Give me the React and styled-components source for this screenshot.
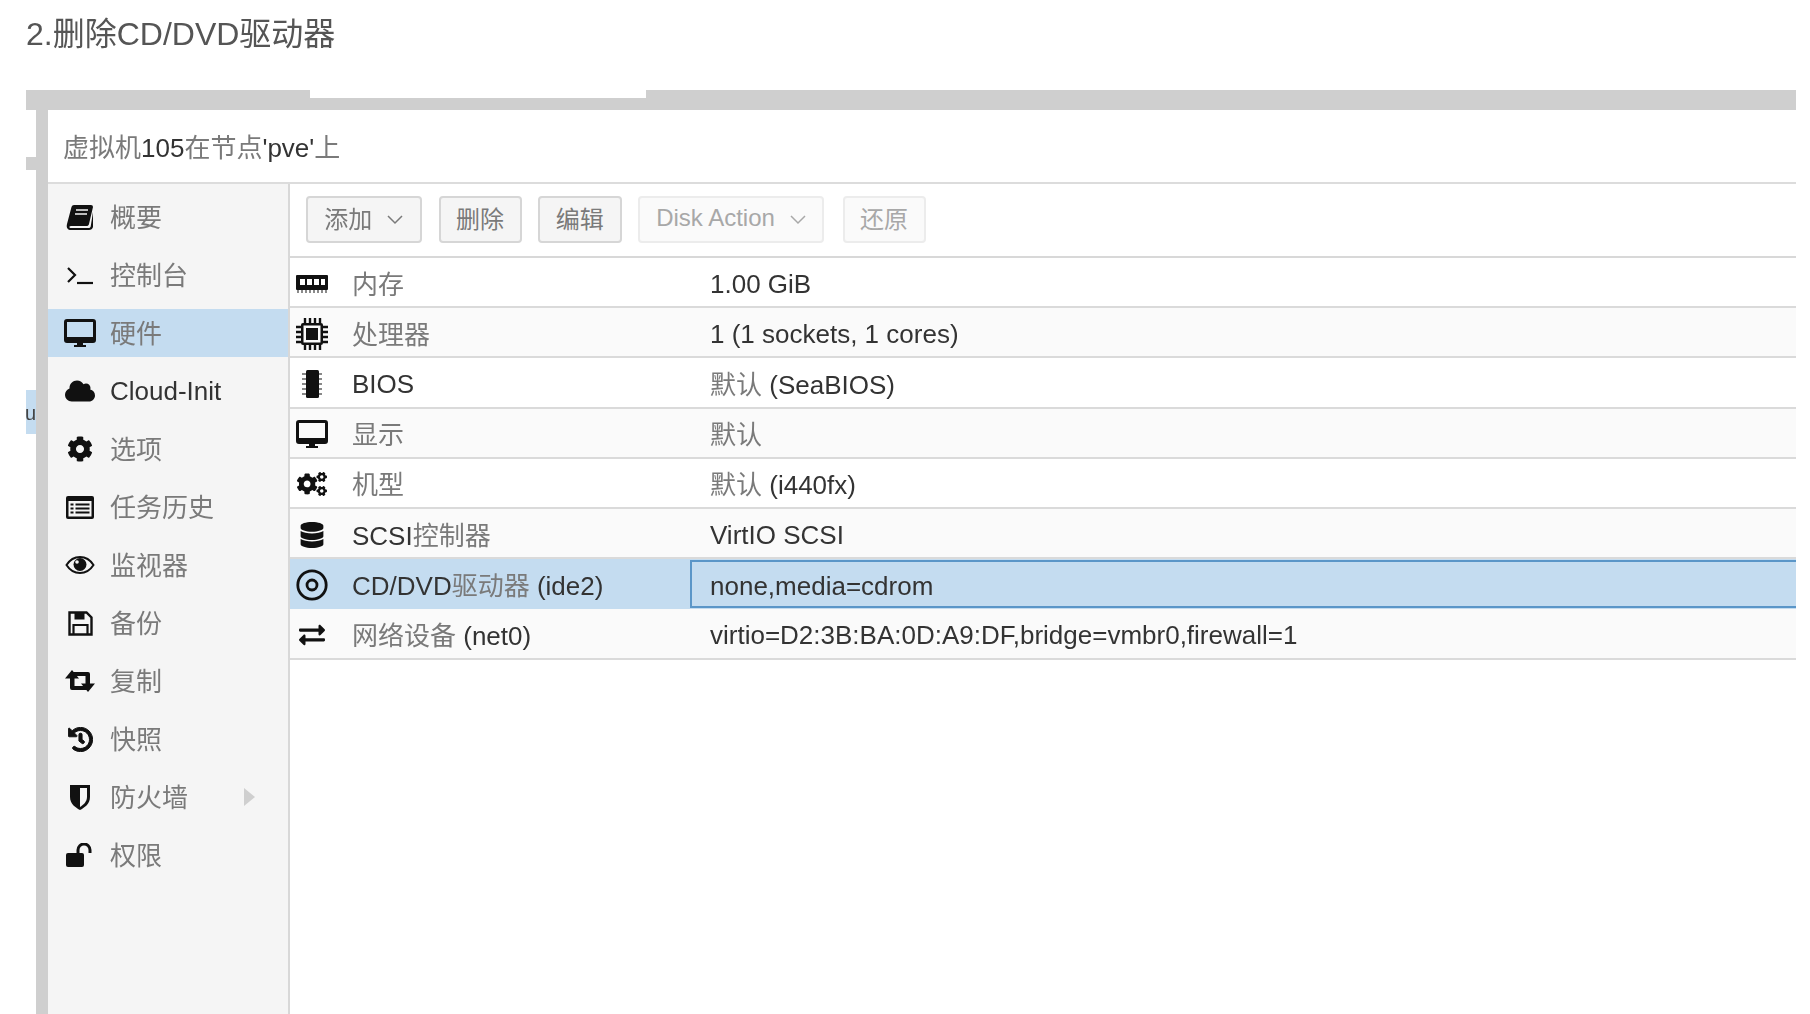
import React from "react";
import styled, { createGlobalStyle } from "styled-components";
import { FaCloud, FaCog, FaCogs, FaDatabase, FaExchangeAlt, FaHistory } from "react-icons/fa";

const Global = createGlobalStyle`
  html, body { margin: 0; padding: 0; background: #fff; height: 100%; overflow: hidden; }
  body { font-family: "Liberation Sans", "Noto Sans CJK SC", sans-serif; color: #333; }
`;

const Page = styled.div`
  width: 1810px; height: 1014px; overflow: hidden; filter: blur(0.7px);
  display: flex; flex-direction: column; padding: 0 14px 0 26px; box-sizing: border-box;
`;
const Title = styled.h1`
  margin: 0; height: 90px; font-size: 32px; font-weight: 400; line-height: 68px; color: #555; flex: none;
`;
const Strip = styled.div`
  position: relative; height: 20px; background: #cfcfcf; flex: none;
`;
const StripTab = styled.div`
  position: absolute; left: 284px; top: 0; width: 336px; height: 8px; background: #fff;
`;
const Body = styled.div`
  flex: 1; display: flex; min-height: 0;
`;
const Gutter = styled.div`
  width: 10px; flex: none; display: flex; flex-direction: column; padding-top: 47px;
`;
const GreyStub = styled.div`
  height: 13px; background: #cfcfcf;
`;
const BlueStub = styled.div`
  height: 44px; margin-top: 220px; background: #c4dcf0; display: flex;
  justify-content: flex-end; font-size: 20px; line-height: 46px; color: #444; white-space: nowrap;
`;
const Bar = styled.div`
  width: 12px; flex: none; background: #cfcfcf;
`;
const Panel = styled.div`
  flex: 1; min-width: 0; display: flex; flex-direction: column;
`;
const PanelHead = styled.div`
  height: 72px; flex: none; padding-left: 15px; font-size: 26px; line-height: 76px; color: #333;
  border-bottom: 2px solid #dcdcdc;
`;
const Content = styled.div`
  flex: 1; display: flex; min-height: 0;
`;
const Side = styled.nav`
  width: 240px; flex: none; background: #f5f5f5; border-right: 2px solid #d8d8d8; padding-top: 9px;
`;
const SideItem = styled.div`
  height: 48px; margin-bottom: 10px; display: flex; align-items: center; padding-left: 14px;
  background: ${p => (p.$active ? "#c4dcf0" : "transparent")};
  font-size: 26px; color: #333;
`;
const SideIcon = styled.span`
  width: 36px; height: 36px; margin-right: 12px; display: flex; align-items: center; justify-content: center;
  color: #111; flex: none;
`;
const Caret = styled.span`
  margin-left: auto; margin-right: 33px; width: 0; height: 0;
  border-left: 11px solid #cfcfcf; border-top: 9px solid transparent; border-bottom: 9px solid transparent;
`;
const Cjk = styled.span`
  color: #7a7a7a;
`;
const SideText = styled(Cjk)`
  margin-bottom: 3px;
`;
const Plain = styled.span`
  padding-top: 4px;
`;
const Main = styled.div`
  flex: 1; min-width: 0; display: flex; flex-direction: column;
`;
const Toolbar = styled.div`
  height: 74px; flex: none; display: flex; align-items: center; padding: 0 0 2px 16px; box-sizing: border-box;
  border-bottom: 2px solid #d8d8d8;
`;
const Btn = styled.div`
  height: 47px; box-sizing: border-box; display: flex; align-items: center; justify-content: center;
  padding-bottom: 3px;
  width: ${p => p.$w}px; margin-right: ${p => p.$gap}px; flex: none;
  background: ${p => (p.$off ? "#fafafa" : "#f5f5f5")};
  border: 2px solid ${p => (p.$off ? "#ececec" : "#d6d6d6")};
  border-radius: 4px; font-size: 24px; color: ${p => (p.$off ? "#a8a8a8" : "#7a7a7a")};
`;
const Chevron = styled.svg`
  width: 16px; height: 10px; margin-left: 15px; margin-top: 5px; flex: none;
`;
const Row = styled.div`
  height: 50.2px; box-sizing: border-box; display: flex; align-items: stretch; flex: none;
  background: ${p => (p.$sel ? "#c4dcf0" : p.$odd ? "#fafafa" : "#fff")};
  border-bottom: 2px solid ${p => (p.$sel ? "#c4dcf0" : "#dadada")};
  font-size: 26px; color: #333;
`;
const NameCell = styled.div`
  width: 400px; flex: none; display: flex; align-items: center; padding-left: 4px; box-sizing: border-box; white-space: nowrap;
`;
const RowIcon = styled.span`
  width: 36px; height: 36px; margin: 3px 22px 0 0; display: flex; align-items: center; justify-content: center;
  color: #111; flex: none;
`;
const ValueCell = styled.div`
  flex: 1; display: flex; align-items: center; padding-left: 18px; white-space: nowrap; box-sizing: border-box;
  border: 2px solid ${p => (p.$focus ? "#5b96c8" : "transparent")};
  border-right: none;
  margin: ${p => (p.$focus ? "1px 0 -1px" : "0")};
`;

const s = { stroke: "currentColor", fill: "none" };
const IBook = () => (
  <svg width="28" height="26" viewBox="0 0 28 26"><path d="M8 1h17a2 2 0 0 1 2 2l-4 17c-.4 1.500-1.200 2-2.500 2H5c-1.500 0-1.800 1-1.500 1.500.3.400 1 .5 2 .5h17c1 0 1.800-.5 2.200-1.500L27 8v15c-.5 2-2 3-4 3H5c-3 0-5-2-4-6L5.500 3C5.900 1.800 6.800 1 8 1z" fill="currentColor"/><path d="M10 6h12M9 10h12" stroke="#f5f5f5" strokeWidth="1.500"/></svg>
);
const ITerm = () => (
  <svg width="28" height="22" viewBox="0 0 28 22"><path d="M2 4l7 7-7 7" {...s} strokeWidth="2.200"/><path d="M11 19h16" {...s} strokeWidth="2.200"/></svg>
);
const IDesk = ({ bg }) => (
  <svg width="32" height="28" viewBox="0 0 32 28"><path d="M3 0h26a3 3 0 0 1 3 3v18a3 3 0 0 1-3 3H19v2h3v2H10v-2h3v-2H3a3 3 0 0 1-3-3V3a3 3 0 0 1 3-3z" fill="currentColor"/><path d="M3 3h26v15H3z" fill={bg}/></svg>
);
const IList = () => (
  <svg width="28" height="23" viewBox="0 0 28 23"><rect x="0" y="0" width="28" height="23" rx="2" fill="currentColor"/><rect x="2.500" y="5" width="23" height="15.500" fill="#f5f5f5"/><path d="M4.500 8.500h3M4.500 12.500h3M4.500 16.500h3M9.500 8.500h14M9.500 12.500h14M9.500 16.500h14" stroke="currentColor" strokeWidth="2"/></svg>
);
const IEye = () => (
  <svg width="30" height="20" viewBox="0 0 30 20"><path d="M1.500 10C5 4.500 9.500 2 15 2s10 2.500 13.500 8C25 15.500 20.500 18 15 18S5 15.500 1.500 10z" {...s} strokeWidth="2"/><circle cx="15" cy="9.500" r="6.500" fill="currentColor"/><circle cx="12" cy="7" r="1.800" fill="#f5f5f5"/></svg>
);
const ISave = () => (
  <svg width="25" height="25" viewBox="0 0 25 25"><path d="M1.500 1.500h17l5 5v17h-22z" {...s} strokeWidth="2.400"/><path d="M6.500 1.500h10v7h-10z" fill="currentColor"/><path d="M5.500 23v-9h14v9" {...s} strokeWidth="2.200"/></svg>
);
const IRetweet = () => (
  <svg width="30" height="24" viewBox="0 0 30 24"><path d="M0 9.500L7 1l7 8.500H9.500V17H20l3 4H7a2 2 0 0 1-2-2V9.500z" fill="currentColor"/><path d="M30 14.500L23 23l-7-8.500h4.500V7H10L7 3h16a2 2 0 0 1 2 2v9.500z" fill="currentColor"/></svg>
);
const IShield = () => (
  <svg width="22" height="26" viewBox="0 0 22 26"><path d="M1 1h20v12c0 7-6 11-10 13C7 24 1 20 1 13z" fill="currentColor"/><path d="M11 4h7v9c0 5-4 8-7 10z" fill="#f5f5f5"/></svg>
);
const IUnlock = () => (
  <svg width="28" height="24" viewBox="0 0 28 24"><rect x="0" y="10" width="18" height="14" rx="2" fill="currentColor"/><path d="M12 11V7a6 6 0 0 1 12 0v3" {...s} strokeWidth="3"/></svg>
);
const IMem = () => (
  <svg width="32" height="20" viewBox="0 0 32 20"><rect x="0" y="1" width="32" height="15" rx="1" fill="currentColor"/><path d="M4 5h5v6H4zM11 5h5v6h-5zM18 5h5v6h-5zM25 5h4v6h-4z" fill="#fff"/><path d="M2 16v3M6 16v3M10 16v3M14 16v3M18 16v3M22 16v3M26 16v3M30 16v3" stroke="#666" strokeWidth="1.500"/></svg>
);
const ICpu = () => (
  <svg width="32" height="32" viewBox="0 0 32 32"><rect x="5" y="5" width="22" height="22" rx="2" fill="currentColor"/><rect x="7.500" y="7.500" width="17" height="17" fill="#fafafa"/><rect x="10" y="10" width="12" height="12" fill="currentColor"/><path d="M9 0v5M14 0v5M19 0v5M24 0v5M9 27v5M14 27v5M19 27v5M24 27v5M0 9h5M0 14h5M0 19h5M0 24h5M27 9h5M27 14h5M27 19h5M27 24h5" stroke="currentColor" strokeWidth="2.400"/></svg>
);
const IChip = () => (
  <svg width="24" height="28" viewBox="0 0 24 28"><rect x="6" y="0" width="13" height="28" rx="1.500" fill="currentColor"/><path d="M2 4h4M2 9h4M2 14h4M2 19h4M2 24h4M19 4h3M19 9h3M19 14h3M19 19h3M19 24h3" stroke="#888" strokeWidth="2"/></svg>
);
const ICd = () => (
  <svg width="32" height="32" viewBox="0 0 32 32"><circle cx="16" cy="16" r="14.200" {...s} strokeWidth="2.800"/><circle cx="16" cy="16" r="5" {...s} strokeWidth="2.800"/></svg>
);
const Down = () => (
  <Chevron viewBox="0 0 16 10"><path d="M1 1l7 7 7-7" fill="none" stroke="currentColor" strokeWidth="1.500"/></Chevron>
);

const side = [
  [<IBook />, <SideText>概要</SideText>],
  [<ITerm />, <SideText>控制台</SideText>],
  [<IDesk bg="#c4dcf0" />, <SideText>硬件</SideText>, true],
  [<FaCloud size={30} />, "Cloud-Init"],
  [<FaCog size={26} />, <SideText>选项</SideText>],
  [<IList />, <SideText>任务历史</SideText>],
  [<IEye />, <SideText>监视器</SideText>],
  [<ISave />, <SideText>备份</SideText>],
  [<IRetweet />, <SideText>复制</SideText>],
  [<FaHistory size={25} strokeWidth={20} />, <SideText>快照</SideText>],
  [<IShield />, <SideText>防火墙</SideText>, false, true],
  [<IUnlock />, <SideText>权限</SideText>],
];

const rows = [
  [<IMem />, <Cjk>内存</Cjk>, <Plain>1.00 GiB</Plain>],
  [<ICpu />, <Cjk>处理器</Cjk>, <Plain>1 (1 sockets, 1 cores)</Plain>],
  [<IChip />, <Plain>BIOS</Plain>, <span><Cjk>默认</Cjk> (SeaBIOS)</span>],
  [<IDesk bg="#fafafa" />, <Cjk>显示</Cjk>, <Cjk>默认</Cjk>],
  [<FaCogs size={30} />, <Cjk>机型</Cjk>, <span><Cjk>默认</Cjk> (i440fx)</span>],
  [<FaDatabase size={26} />, <span>SCSI<Cjk>控制器</Cjk></span>, <Plain>VirtIO SCSI</Plain>],
  [<ICd />, <span>CD/DVD<Cjk>驱动器</Cjk> (ide2)</span>, <Plain>none,media=cdrom</Plain>, true],
  [<FaExchangeAlt size={26} />, <span><Cjk>网络设备</Cjk> (net0)</span>, <Plain>virtio=D2:3B:BA:0D:A9:DF,bridge=vmbr0,firewall=1</Plain>],
];

export default function App() {
  return (
    <>
      <Global />
      <Page>
        <Title>2.删除CD/DVD驱动器</Title>
        <Strip><StripTab /></Strip>
        <Body>
          <Gutter>
            <GreyStub />
            <BlueStub>u</BlueStub>
          </Gutter>
          <Bar />
          <Panel>
            <PanelHead><Cjk>虚拟机</Cjk>105<Cjk>在节点</Cjk>'pve'<Cjk>上</Cjk></PanelHead>
            <Content>
              <Side>
                {side.map(([icon, label, active, caret], i) => (
                  <SideItem key={i} $active={active}>
                    <SideIcon>{icon}</SideIcon>
                    {label}
                    {caret && <Caret />}
                  </SideItem>
                ))}
              </Side>
              <Main>
                <Toolbar>
                  <Btn $w={115.5} $gap={17}>添加<Down /></Btn>
                  <Btn $w={83} $gap={16.5}>删除</Btn>
                  <Btn $w={83.5} $gap={16.5}>编辑</Btn>
                  <Btn $w={186} $gap={18.5} $off>Disk Action<Down /></Btn>
                  <Btn $w={83} $gap={0} $off>还原</Btn>
                </Toolbar>
                {rows.map(([icon, name, value, sel], i) => (
                  <Row key={i} $odd={i % 2 === 1} $sel={sel}>
                    <NameCell>
                      <RowIcon>{icon}</RowIcon>
                      {name}
                    </NameCell>
                    <ValueCell $focus={sel}>{value}</ValueCell>
                  </Row>
                ))}
              </Main>
            </Content>
          </Panel>
        </Body>
      </Page>
    </>
  );
}
